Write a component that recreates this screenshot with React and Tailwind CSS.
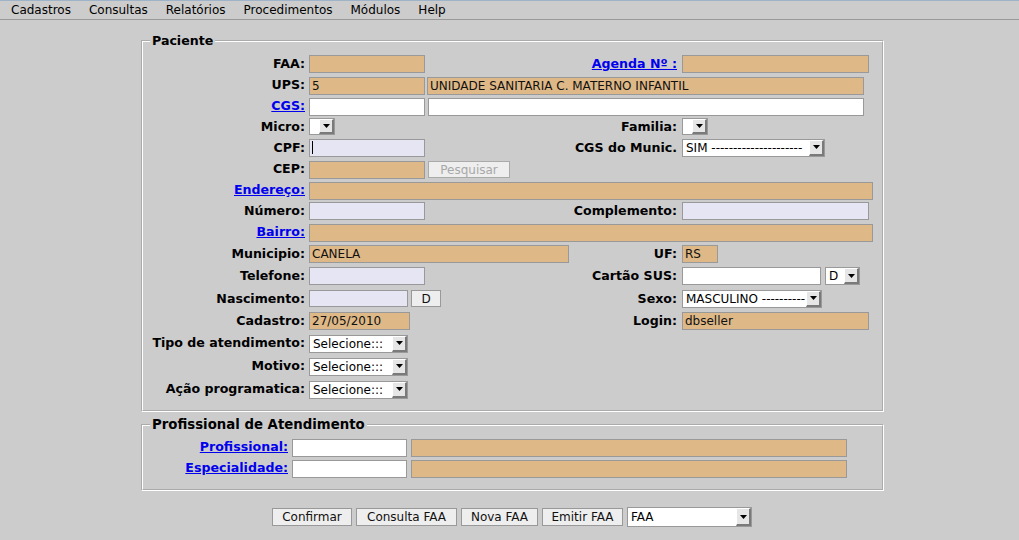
import React from "react";

const orange = "bg-[#deb887]";
const lav = "bg-[#e5e5f3]";
const white = "bg-white";

const Field = ({ w, bg, h = "h-[18px]", children, className = "" }) => (
  <div
    className={`${w} ${h} ${bg} ${className} shrink-0 border border-[#999] pl-[2px] flex items-center whitespace-nowrap overflow-hidden text-[12px] text-[#111]`}
  >
    {children}
  </div>
);

const Arrow = () => (
  <span className="w-[15px] shrink-0 flex items-center justify-center bg-[#e6e6e6] border-t border-l border-white border-r-2 border-b-2 border-r-[#7a7a7a] border-b-[#7a7a7a]">
    <svg width="7" height="4" viewBox="0 0 7 4">
      <path d="M0 0h7L3.5 4z" fill="#000" />
    </svg>
  </span>
);

const Select = ({ w, h = "h-[18px]", text }) => (
  <div className={`${w} ${h} shrink-0 flex items-stretch border border-[#999] bg-white text-[12px]`}>
    <span className="flex-1 pl-[3px] flex items-center whitespace-nowrap overflow-hidden">{text}</span>
    <Arrow />
  </div>
);

const Btn = ({ w, h = "h-[18px]", disabled, children }) => (
  <div
    className={`${w} ${h} shrink-0 flex items-center justify-center border text-[12px] ${
      disabled ? "border-[#aaa] bg-[#eeeeee] text-[#a8a8a8]" : "border-[#999] bg-[#eeeeee] text-[#111]"
    }`}
  >
    {children}
  </div>
);

const Label = ({ children, link, w = "w-[162px]" }) => (
  <div className={`${w} shrink-0 text-right font-bold text-[12.6px] whitespace-nowrap`}>
    {link ? <a className="text-[#0000ee] underline">{children}</a> : children}
  </div>
);

const Row = ({ h, label, link, right, rightLabel, rightLink, children }) => (
  <div className={`${h} flex items-center`}>
    <Label link={link}>{label}</Label>
    <div className="ml-[4px] flex-1 flex items-center">
      {children}
      {rightLabel !== undefined && (
        <>
          <div className="flex-1 text-right font-bold text-[12.6px] whitespace-nowrap mr-[5px]">
            {rightLink ? <a className="text-[#0000ee] underline">{rightLabel}</a> : rightLabel}
          </div>
          <div className="w-[200px] shrink-0 flex items-center">{right}</div>
        </>
      )}
    </div>
  </div>
);

const menu = ["Cadastros", "Consultas", "Relatórios", "Procedimentos", "Módulos", "Help"];

export default function App() {
  return (
    <div className="w-[1019px] h-[540px] overflow-hidden bg-[#cccccc] font-['DejaVu_Sans',sans-serif] text-[12px] text-black">
      <div className="h-[20px] border-t border-[#9fb3c8] border-b border-b-[#999] flex items-center gap-[18px] pl-[11px] text-[12px]">
        {menu.map((m) => (
          <span key={m}>{m}</span>
        ))}
      </div>

      <fieldset className="ml-[141px] mt-[14px] w-[743px] border-2 [border-style:groove] border-white pt-[6px] pb-[9px]">
        <legend className="ml-[7px] px-[2px] font-bold text-[12.6px] leading-[14px]">Paciente</legend>

        <Row h="h-[21px]" label="FAA:" rightLabel="Agenda Nº :" rightLink right={<Field w="w-[187px]" bg={orange} />}>
          <Field w="w-[116px]" bg={orange} />
        </Row>
        <Row h="h-[21px]" label="UPS:">
          <Field w="w-[116px]" bg={orange}>5</Field>
          <Field w="w-[437px]" bg={orange} className="ml-[2px]">UNIDADE SANITARIA C. MATERNO INFANTIL</Field>
        </Row>
        <Row h="h-[21px]" label="CGS:" link>
          <Field w="w-[116px]" bg={white} />
          <Field w="w-[436px]" bg={white} className="ml-[3px]" />
        </Row>
        <Row h="h-[20px]" label="Micro:" rightLabel="Familia:" right={<Select w="w-[26px]" h="h-[17px]" text="" />}>
          <Select w="w-[26px]" h="h-[17px]" text="" />
        </Row>
        <Row
          h="h-[22px]"
          label="CPF:"
          rightLabel="CGS do Munic."
          right={<Select w="w-[143px]" text="SIM ---------------------" />}
        >
          <Field w="w-[116px]" bg={lav}>
            <span className="w-[1px] h-[13px] bg-black" />
          </Field>
        </Row>
        <Row h="h-[21px]" label="CEP:">
          <Field w="w-[116px]" bg={orange} />
          <div className="ml-[3px]">
            <Btn w="w-[82px]" h="h-[17px]" disabled>
              Pesquisar
            </Btn>
          </div>
        </Row>
        <Row h="h-[21px]" label="Endereço:" link>
          <Field w="w-[564px]" bg={orange} />
        </Row>
        <Row h="h-[21px]" label="Número:" rightLabel="Complemento:" right={<Field w="w-[187px]" bg={lav} />}>
          <Field w="w-[116px]" bg={lav} />
        </Row>
        <Row h="h-[21px]" label="Bairro:" link>
          <Field w="w-[564px]" bg={orange} />
        </Row>
        <Row h="h-[22px]" label="Municipio:" rightLabel="UF:" right={<Field w="w-[36px]" bg={orange}>RS</Field>}>
          <Field w="w-[260px]" bg={orange}>CANELA</Field>
        </Row>
        <Row
          h="h-[23px]"
          label="Telefone:"
          rightLabel="Cartão SUS:"
          right={
            <>
              <Field w="w-[139px]" bg={white} />
              <div className="ml-[4px]">
                <Select w="w-[35px]" text="D" />
              </div>
            </>
          }
        >
          <Field w="w-[116px]" bg={lav} />
        </Row>
        <Row
          h="h-[22px]"
          label="Nascimento:"
          rightLabel="Sexo:"
          right={<Select w="w-[140px]" text="MASCULINO ----------" />}
        >
          <Field w="w-[99px]" h="h-[17px]" bg={lav} />
          <div className="ml-[3px]">
            <Btn w="w-[30px]" h="h-[17px]">
              D
            </Btn>
          </div>
        </Row>
        <Row h="h-[22px]" label="Cadastro:" rightLabel="Login:" right={<Field w="w-[187px]" bg={orange}>dbseller</Field>}>
          <Field w="w-[101px]" bg={orange}>27/05/2010</Field>
        </Row>
        <Row h="h-[23px]" label="Tipo de atendimento:">
          <Select w="w-[99px]" text="Selecione:::" />
        </Row>
        <Row h="h-[23px]" label="Motivo:">
          <Select w="w-[99px]" text="Selecione:::" />
        </Row>
        <Row h="h-[23px]" label="Ação programatica:">
          <Select w="w-[99px]" text="Selecione:::" />
        </Row>
      </fieldset>

      <fieldset className="ml-[141px] mt-[6px] w-[743px] border-2 [border-style:groove] border-white pt-[5px] pb-[10px]">
        <legend className="ml-[7px] px-[2px] font-bold text-[13.3px] leading-[14px]">Profissional de Atendimento</legend>
        <div className="h-[21px] flex items-center">
          <Label w="w-[145px]" link>
            Profissional:
          </Label>
          <Field w="w-[115px]" bg={white} className="ml-[4px]" />
          <Field w="w-[436px]" bg={orange} className="ml-[4px]" />
        </div>
        <div className="h-[21px] flex items-center">
          <Label w="w-[145px]" link>
            Especialidade:
          </Label>
          <Field w="w-[115px]" bg={white} className="ml-[4px]" />
          <Field w="w-[436px]" bg={orange} className="ml-[4px]" />
        </div>
      </fieldset>

      <div className="mt-[16px] ml-[272px] flex items-center gap-[4px]">
        <Btn w="w-[80px]">Confirmar</Btn>
        <Btn w="w-[101px]">Consulta FAA</Btn>
        <Btn w="w-[77px]">Nova FAA</Btn>
        <Btn w="w-[81px]">Emitir FAA</Btn>
        <Select w="w-[125px]" h="h-[20px]" text="FAA" />
      </div>
    </div>
  );
}
